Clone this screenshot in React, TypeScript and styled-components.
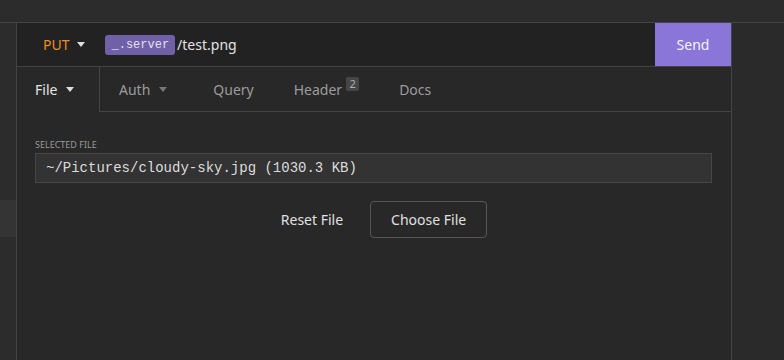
import React from 'react';
import styled, { createGlobalStyle } from 'styled-components';

const Global = createGlobalStyle`
  html, body {
    margin: 0;
    padding: 0;
    background: #2c2c2c;
    overflow: hidden;
  }
  body {
    font-family: "Noto Sans", "Open Sans", sans-serif;
  }
`;

const Page = styled.div`
  width: 784px;
  height: 360px;
  display: flex;
  flex-direction: column;
  background: #2c2c2c;
`;

const TopBar = styled.div`
  height: 22px;
  flex: none;
  border-bottom: 1px solid #444;
  background: #2c2c2c;
`;

const Workspace = styled.div`
  flex: 1;
  display: flex;
  min-height: 0;
`;

const Sidebar = styled.div`
  width: 17px;
  flex: none;
  border-right: 1px solid #444;
  background: #2c2c2c;
  padding-top: 177px;
  box-sizing: border-box;
`;

const SidebarItem = styled.div`
  height: 37px;
  background: #343434;
`;

const Pane = styled.div`
  width: 714px;
  flex: none;
  display: flex;
  flex-direction: column;
  background: #282828;
  border-right: 1px solid #444;
`;

const Aside = styled.div`
  flex: 1;
  background: #2a2a2a;
`;

const UrlBar = styled.div`
  height: 43px;
  flex: none;
  display: flex;
  align-items: stretch;
  background: #222;
  border-bottom: 1px solid #444;
`;

const Method = styled.div`
  display: flex;
  align-items: center;
  gap: 7px;
  padding: 0 20px 0 26px;
  color: #ee8c1c;
  font-size: 14px;
`;

const Caret = styled.span<{ $color?: string; $after?: number }>`
  display: inline-block;
  width: 0;
  height: 0;
  border-left: 4.5px solid transparent;
  border-right: 4.5px solid transparent;
  border-top: 5px solid ${(p) => p.$color || '#ddd'};
  margin-right: ${(p) => p.$after || 0}px;
`;

const UrlField = styled.div`
  flex: 1;
  display: flex;
  align-items: center;
  color: #e2e2e2;
  font-size: 14px;
`;

const EnvTag = styled.span`
  display: inline-flex;
  align-items: center;
  height: 20px;
  padding: 0 6px 0 7px;
  margin-right: 2px;
  border-radius: 3px;
  background: #6f60a8;
  color: #e4e0f4;
  font-family: "Liberation Mono", "DejaVu Sans Mono", monospace;
  font-size: 12px;
`;

const SendButton = styled.button`
  width: 76px;
  border: none;
  background: #8a76d8;
  color: #f4f2fb;
  font-family: inherit;
  font-size: 14px;
  padding: 0;
`;

const Tabs = styled.div`
  height: 45px;
  flex: none;
  display: flex;
`;

const Tab = styled.div<{ $active?: boolean }>`
  display: flex;
  align-items: center;
  gap: 9px;
  padding: ${(p) => (p.$active ? '0 23px 0 18px' : '0 21px 0 19px')};
  color: ${(p) => (p.$active ? '#e6e6e6' : '#9c9c9c')};
  font-size: 14px;
  box-sizing: border-box;
  border-right: ${(p) => (p.$active ? '1px solid #444' : 'none')};
  border-bottom: ${(p) => (p.$active ? 'none' : '1px solid #444')};
  width: ${(p) => (p.$active ? '83px' : 'auto')};
`;

const TabFill = styled.div`
  flex: 1;
  border-bottom: 1px solid #444;
`;

const Badge = styled.span`
  align-self: flex-start;
  margin: 10px 0 0 -5px;
  min-width: 13px;
  height: 14px;
  border-radius: 2px;
  background: #464646;
  color: #b0b0b0;
  font-size: 11px;
  line-height: 14px;
  text-align: center;
`;

const Body = styled.div`
  padding: 27px 19px 0 18px;
  display: flex;
  flex-direction: column;
`;

const Label = styled.div`
  color: #9a9a9a;
  font-size: 9px;
  text-transform: uppercase;
  line-height: 11px;
  margin-bottom: 3px;
`;

const FileField = styled.div`
  height: 30px;
  box-sizing: border-box;
  display: flex;
  align-items: center;
  padding-left: 10px;
  background: #333;
  border: 1px solid #474747;
  color: #dcdcdc;
  font-family: "Liberation Mono", "DejaVu Sans Mono", monospace;
  font-size: 14px;
`;

const Actions = styled.div`
  display: flex;
  justify-content: center;
  gap: 6px;
  margin-top: 18px;
`;

const ActionButton = styled.button<{ $outlined?: boolean }>`
  height: 37px;
  padding: 0 20px;
  border-radius: 4px;
  border: 1px solid ${(p) => (p.$outlined ? '#575757' : 'transparent')};
  background: transparent;
  color: #e0e0e0;
  font-family: inherit;
  font-size: 14px;
`;

export default function App() {
  return (
    <>
      <Global />
      <Page>
        <TopBar />
        <Workspace>
          <Sidebar>
            <SidebarItem />
          </Sidebar>
          <Pane>
            <UrlBar>
              <Method>
                PUT <Caret />
              </Method>
              <UrlField>
                <EnvTag>_.server</EnvTag>/test.png
              </UrlField>
              <SendButton>Send</SendButton>
            </UrlBar>
            <Tabs>
              <Tab $active>
                File <Caret />
              </Tab>
              <Tab>
                Auth <Caret $color="#777" $after={6} />
              </Tab>
              <Tab>Query</Tab>
              <Tab>
                Header <Badge>2</Badge>
              </Tab>
              <Tab>Docs</Tab>
              <TabFill />
            </Tabs>
            <Body>
              <Label>Selected File</Label>
              <FileField>~/Pictures/cloudy-sky.jpg (1030.3 KB)</FileField>
              <Actions>
                <ActionButton>Reset File</ActionButton>
                <ActionButton $outlined>Choose File</ActionButton>
              </Actions>
            </Body>
          </Pane>
          <Aside />
        </Workspace>
      </Page>
    </>
  );
}
